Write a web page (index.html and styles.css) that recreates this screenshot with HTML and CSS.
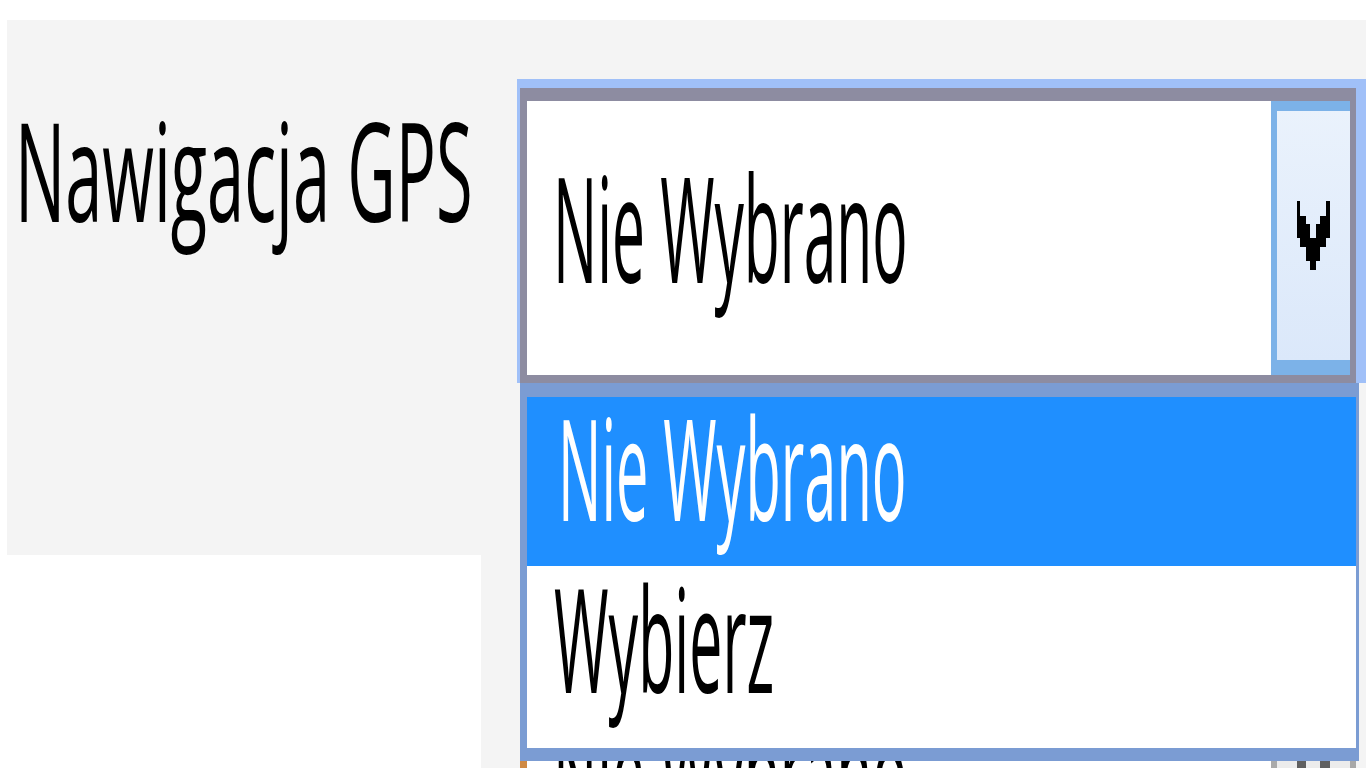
FILE: index.html
```html
<!DOCTYPE html>
<html lang="pl">
<head>
<meta charset="utf-8">
<title>Nawigacja GPS</title>
<link rel="stylesheet" href="styles.css">
</head>
<body>
<div class="page">
  <div class="panel">
    <label class="label"><span class="sx">Nawigacja GPS</span></label>
    <div class="select-wrap">
      <div class="select">
        <div class="value"><span class="sx">Nie Wybrano</span></div>
        <div class="btn">
          <svg class="arrow" width="33" height="69" viewBox="0 0 33 69" shape-rendering="crispEdges"><path d="M0 0H3V15H9V23H13V37H19V23H23V15H29V0H33V37H29V46H23V60H19V69H13V60H9V46H3V37H0Z"/></svg>
        </div>
      </div>
      <ul class="list">
        <li class="opt opt1"><span class="sx">Nie Wybrano</span></li>
        <li class="opt opt2"><span class="sx">Wybierz</span></li>
      </ul>
    </div>
  </div>
  <div class="row2">
    <div class="blank"></div>
    <div class="col">
      <div class="select dis">
        <div class="value"><span class="sx">Nie Wybrano</span></div>
        <div class="btn">
          <svg class="arrow" width="33" height="69" viewBox="0 0 33 69" shape-rendering="crispEdges"><path d="M0 0H3V15H9V23H13V37H19V23H23V15H29V0H33V37H29V46H23V60H19V69H13V60H9V46H3V37H0Z"/></svg>
        </div>
      </div>
    </div>
  </div>
</div>
</body>
</html>
```
FILE: styles.css
```css
html, body {
  margin: 0;
  height: 768px;
  overflow: hidden;
  background: #fff;
  font-family: "Open Sans", "Noto Sans", sans-serif;
  color: #000;
}

.page {
  width: 1366px;
  overflow: hidden;
}

.panel {
  margin: 20px 0 0 7px;
  height: 535px;
  box-sizing: border-box;
  background: #f4f4f4;
  display: flex;
  align-items: flex-start;
  padding-top: 59px;
}

.sx {
  display: inline-block;
  transform-origin: 0 50%;
  white-space: nowrap;
}

.label {
  flex: none;
  width: 510px;
  box-sizing: border-box;
  padding-left: 8px;
  margin-top: 22px;
  font-size: 137px;
  line-height: 137px;
  white-space: nowrap;
}
.label .sx { transform: scaleX(0.487); }

.select-wrap {
  position: relative;
  z-index: 5;
  flex: none;
  width: 836px;
  border: solid #a0c0f8;
  border-width: 9px 10px 0 3px;
}

.select {
  display: flex;
  height: 295px;
  box-sizing: border-box;
  border: solid #8d8ca1;
  border-width: 13px 6px 8px 7px;
  background: #fff;
}

.value {
  flex: 1;
  min-width: 0;
  overflow: hidden;
  font-size: 146px;
  line-height: 251px;
  padding: 0 0 23px 26px;
  white-space: nowrap;
}
.value .sx { transform: scaleX(0.402); }

.btn {
  flex: none;
  width: 79px;
  box-sizing: border-box;
  border: solid #7cb2e8;
  border-width: 10px 0 15px 6px;
  background: linear-gradient(#eaf2fc, #dbe8fa);
  display: flex;
  align-items: center;
  justify-content: center;
}
.arrow { display: block; fill: #000; }

.list {
  position: absolute;
  left: 0;
  top: 100%;
  width: 839px;
  margin: 0;
  padding: 0;
  list-style: none;
  box-sizing: border-box;
  border: solid #7b9cd3;
  border-width: 14px 3px 13px 7px;
  background: #fff;
}

.opt {
  box-sizing: border-box;
  white-space: nowrap;
  overflow: hidden;
}
.opt1 {
  height: 169px;
  background: #1f8fff;
  color: #fff;
  font-size: 141px;
  line-height: 139px;
  padding: 0 0 30px 31px;
}
.opt1 .sx { transform: scaleX(0.409); }
.opt2 {
  height: 182px;
  font-size: 145px;
  line-height: 141px;
  padding: 0 0 41px 27px;
}
.opt2 .sx { transform: scaleX(0.4075); }

.row2 {
  display: flex;
  height: 213px;
}
.blank {
  flex: none;
  width: 481px;
  background: #fff;
}
.col {
  flex: 1;
  min-width: 0;
  background: #f4f4f4;
  padding: 78px 0 0 39px;
}
.select.dis {
  width: 836px;
  height: 295px;
  border-color: #a8a8a8;
  border-left-color: #cf8a44;
}
.dis .btn {
  border-color: #aaaaaa;
  background: #ececec;
}
.dis .arrow { fill: #606060; }
```
